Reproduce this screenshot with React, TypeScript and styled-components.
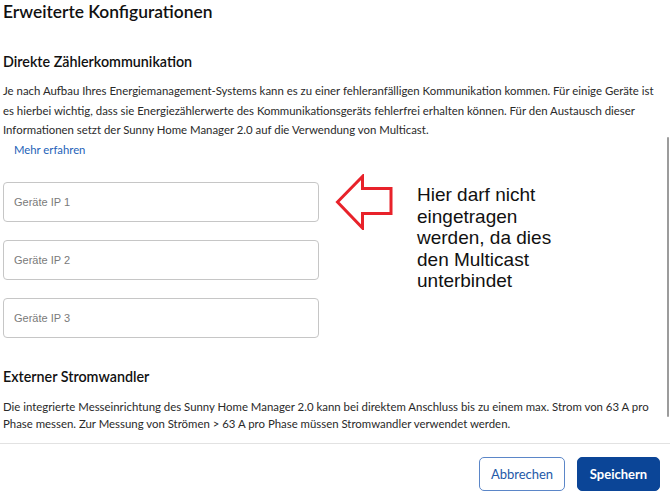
import React from 'react';
import styled, { createGlobalStyle } from 'styled-components';

const GlobalStyle = createGlobalStyle`
    html, body {
        margin: 0;
        padding: 0;
        background: #ffffff;
    }
    * {
        box-sizing: border-box;
    }
`;

const FONT = `Lato, "Noto Sans", sans-serif`;

const fields = ['Geräte IP 1', 'Geräte IP 2', 'Geräte IP 3'];

const App = () => {
    return (
        <Dialog>
            <GlobalStyle />
            <Header>
                <Title>Erweiterte Konfigurationen</Title>
            </Header>
            <Body>
                <Content>
                    <SectionTitle>Direkte Zählerkommunikation</SectionTitle>
                    <Paragraph lineHeight={19.5} top={9}>
                        Je nach Aufbau Ihres Energiemanagement-Systems kann es zu einer fehleranfälligen Kommunikation kommen. Für einige Geräte ist<br />
                        es hierbei wichtig, dass sie Energiezählerwerte des Kommunikationsgeräts fehlerfrei erhalten können. Für den Austausch dieser<br />
                        Informationen setzt der Sunny Home Manager 2.0 auf die Verwendung von Multicast.
                    </Paragraph>
                    <MoreLink href="#">Mehr erfahren</MoreLink>
                    <FieldRow>
                        <FieldColumn>
                            {fields.map((label) => (
                                <Field key={label} placeholder={label} />
                            ))}
                        </FieldColumn>
                        <Arrow viewBox="0 0 58 56" width="58" height="56">
                            <polygon
                                points="2.5,28 27.5,2.5 27.5,14.5 56,14.5 56,39.5 27.5,39.5 27.5,54 2.5,28"
                                fill="none"
                                stroke="#e8222a"
                                strokeWidth="3"
                                strokeLinejoin="miter"
                            />
                        </Arrow>
                        <Note>
                            Hier darf nicht<br />
                            eingetragen<br />
                            werden, da dies<br />
                            den Multicast<br />
                            unterbindet
                        </Note>
                    </FieldRow>
                    <SectionTitle top={29}>Externer Stromwandler</SectionTitle>
                    <Paragraph lineHeight={16.5} top={12}>
                        Die integrierte Messeinrichtung des Sunny Home Manager 2.0 kann bei direktem Anschluss bis zu einem max. Strom von 63 A pro<br />
                        Phase messen. Zur Messung von Strömen &gt; 63 A pro Phase müssen Stromwandler verwendet werden.
                    </Paragraph>
                </Content>
                <ScrollTrack>
                    <ScrollThumb />
                </ScrollTrack>
            </Body>
            <Footer>
                <SecondaryButton>Abbrechen</SecondaryButton>
                <PrimaryButton>Speichern</PrimaryButton>
            </Footer>
        </Dialog>
    );
};

const Dialog = styled.div`
    width: 670px;
    height: 496px;
    display: flex;
    flex-direction: column;
    background: #ffffff;
    font-family: ${FONT};
    color: #222222;
    overflow: hidden;
`;

const Header = styled.div`
    height: 36px;
    padding: 0 3px;
    flex-shrink: 0;
`;

const Title = styled.h1`
    margin: 0;
    font-size: 17.4px;
    line-height: 24px;
    font-weight: 600;
    color: #111111;
`;

const Body = styled.div`
    flex: 1;
    display: flex;
    min-height: 0;
    border-bottom: 1px solid #e2e2e2;
`;

const Content = styled.div`
    flex: 1;
    padding: 0 3px;
    overflow: hidden;
`;

const ScrollTrack = styled.div`
    width: 4px;
    flex-shrink: 0;
    padding-top: 101px;
`;

const ScrollThumb = styled.div`
    width: 2px;
    height: 280px;
    margin-left: 1px;
    background: #9c9c9c;
    border-radius: 1px;
`;

const SectionTitle = styled.h2<{ top?: number }>`
    margin: ${(p) => p.top ?? 16}px 0 0;
    font-size: 14.3px;
    line-height: 20px;
    font-weight: 600;
    color: #111111;
`;

const Paragraph = styled.p<{ lineHeight: number; top: number }>`
    margin: ${(p) => p.top}px 0 0;
    font-size: 11.4px;
    line-height: ${(p) => p.lineHeight}px;
    color: #2a2a2a;
    white-space: nowrap;
`;

const MoreLink = styled.a`
    display: block;
    margin: 1.5px 0 0 11px;
    font-size: 11.3px;
    line-height: 18px;
    color: #2462b8;
    text-decoration: none;
`;

const FieldRow = styled.div`
    display: flex;
    align-items: flex-start;
    margin-top: 23px;
`;

const FieldColumn = styled.div`
    display: flex;
    flex-direction: column;
    gap: 18px;
    width: 316px;
`;

const Field = styled.input`
    height: 40px;
    border: 1px solid #c6c6c6;
    border-radius: 4px;
    padding: 0 10px;
    font-family: "Liberation Sans", Arial, sans-serif;
    font-size: 11px;
    color: #333333;
    outline: none;

    &::placeholder {
        color: #7a7a7a;
    }
`;

const Arrow = styled.svg`
    flex-shrink: 0;
    margin: -8px 0 0 16px;
`;

const Note = styled.div`
    margin: 2px 0 0 24px;
    font-family: "Liberation Sans", Arial, sans-serif;
    font-size: 19px;
    line-height: 21.5px;
    color: #111111;
`;

const Footer = styled.div`
    height: 52px;
    flex-shrink: 0;
    display: flex;
    justify-content: flex-end;
    align-items: flex-start;
    gap: 12px;
    padding: 13px 10px 0 0;
`;

const ButtonBase = styled.button`
    height: 34px;
    border-radius: 5px;
    font-family: ${FONT};
    font-size: 13px;
    cursor: pointer;
`;

const SecondaryButton = styled(ButtonBase)`
    width: 86px;
    background: #ffffff;
    border: 1px solid #5b86c8;
    color: #2459a8;
    font-weight: 400;
`;

const PrimaryButton = styled(ButtonBase)`
    width: 83px;
    background: #0b4597;
    border: 1px solid #0b4597;
    color: #ffffff;
    font-weight: 700;
`;

export default App;
